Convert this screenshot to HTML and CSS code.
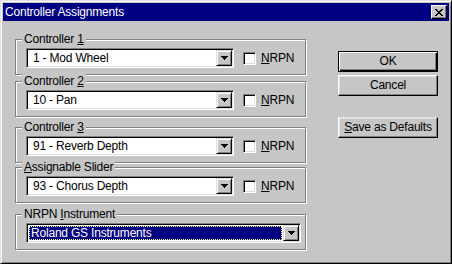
FILE: index.html
```html
<!DOCTYPE html>
<html>
<head>
<meta charset="utf-8">
<title>Controller Assignments</title>
<link rel="stylesheet" href="styles.css">
</head>
<body>
<div class="window">
  <div class="titlebar">
    <span class="title">Controller Assignments</span>
    <span class="close-btn">
      <svg width="8" height="7" viewBox="0 0 8 7" shape-rendering="crispEdges"><path d="M0 0h2v1h-2zM6 0h2v1h-2zM1 1h2v1h-2zM5 1h2v1h-2zM2 2h4v1h-4zM3 3h2v1h-2zM2 4h4v1h-4zM1 5h2v1h-2zM5 5h2v1h-2zM0 6h2v1h-2zM6 6h2v1h-2z" fill="#000"/></svg>
    </span>
  </div>
  <div class="content">
    <div class="groups">
      <div class="group">
        <div class="legend">Controller <u>1</u></div>
        <div class="row">
          <div class="combo"><span class="combo-text">1 - Mod Wheel</span><span class="drop"><svg width="7" height="4" viewBox="0 0 7 4" shape-rendering="crispEdges"><path d="M0 0h7v1h-1v1h-1v1h-1v1h-1v-1h-1v-1h-1v-1h-1z" fill="#000"/></svg></span></div>
          <span class="check"></span><span class="check-label"><u>N</u>RPN</span>
        </div>
      </div>
      <div class="group g2">
        <div class="legend">Controller <u>2</u></div>
        <div class="row">
          <div class="combo"><span class="combo-text">10 - Pan</span><span class="drop"><svg width="7" height="4" viewBox="0 0 7 4" shape-rendering="crispEdges"><path d="M0 0h7v1h-1v1h-1v1h-1v1h-1v-1h-1v-1h-1v-1h-1z" fill="#000"/></svg></span></div>
          <span class="check"></span><span class="check-label"><u>N</u>RPN</span>
        </div>
      </div>
      <div class="group g3">
        <div class="legend">Controller <u>3</u></div>
        <div class="row">
          <div class="combo"><span class="combo-text">91 - Reverb Depth</span><span class="drop"><svg width="7" height="4" viewBox="0 0 7 4" shape-rendering="crispEdges"><path d="M0 0h7v1h-1v1h-1v1h-1v1h-1v-1h-1v-1h-1v-1h-1z" fill="#000"/></svg></span></div>
          <span class="check"></span><span class="check-label"><u>N</u>RPN</span>
        </div>
      </div>
      <div class="group g4">
        <div class="legend"><u>A</u>ssignable Slider</div>
        <div class="row">
          <div class="combo"><span class="combo-text">93 - Chorus Depth</span><span class="drop"><svg width="7" height="4" viewBox="0 0 7 4" shape-rendering="crispEdges"><path d="M0 0h7v1h-1v1h-1v1h-1v1h-1v-1h-1v-1h-1v-1h-1z" fill="#000"/></svg></span></div>
          <span class="check"></span><span class="check-label"><u>N</u>RPN</span>
        </div>
      </div>
      <div class="group g5">
        <div class="legend">NRPN <u>I</u>nstrument</div>
        <div class="row">
          <div class="combo wide"><span class="combo-sel"><span class="sel-text">Roland GS Instruments</span></span><span class="drop"><svg width="7" height="4" viewBox="0 0 7 4" shape-rendering="crispEdges"><path d="M0 0h7v1h-1v1h-1v1h-1v1h-1v-1h-1v-1h-1v-1h-1z" fill="#000"/></svg></span></div>
        </div>
      </div>
    </div>
    <div class="buttons">
      <div class="btn default">OK</div>
      <div class="btn cancel">Cancel</div>
      <div class="btn save"><u>S</u>ave as Defaults</div>
    </div>
  </div>
</div>
</body>
</html>
```
FILE: styles.css
```css
html, body {
  margin: 0;
  padding: 0;
  background: #c6c6c6;
}
body {
  font-family: "Liberation Sans", Arial, sans-serif;
  font-size: 12px;
  letter-spacing: -0.2px;
  color: #000;
}
u {
  text-decoration: underline;
  text-underline-offset: 1px;
}
.window {
  width: 452px;
  height: 264px;
  box-sizing: border-box;
  background: #c6c6c6;
  border: 1px solid;
  border-color: #dfdfdf #000 #000 #dfdfdf;
  box-shadow: inset 1px 1px #fff, inset -1px -1px #808080;
  padding: 2px;
  display: flex;
  flex-direction: column;
}
.titlebar {
  height: 18px;
  flex: none;
  background: #000080;
  color: #fff;
  display: flex;
  align-items: center;
  padding: 0 2px 0 2px;
}
.title {
  flex: 1;
  line-height: 18px;
}
.close-btn {
  width: 16px;
  height: 14px;
  box-sizing: border-box;
  background: #c6c6c6;
  border: 1px solid;
  border-color: #fff #000 #000 #fff;
  box-shadow: inset -1px -1px #808080;
  display: flex;
  align-items: center;
  justify-content: center;
}
.close-btn svg {
  display: block;
  margin-left: -1px;
}
.content {
  flex: 1;
  display: flex;
  padding: 18px 0 0 12px;
}
.groups {
  display: flex;
  flex-direction: column;
  width: 292px;
}
.group {
  position: relative;
  box-sizing: border-box;
  width: 291px;
  height: 36px;
  border: 1px solid #808080;
  box-shadow: inset 1px 1px #fff, 1px 1px #fff;
  padding: 8px 0 0 10px;
}
.g2 { margin-top: 6px; }
.g3 { margin-top: 10px; }
.g4 { margin-top: 4px; }
.g5 { margin-top: 11px; }
.legend {
  position: absolute;
  left: 6px;
  top: -8px;
  padding: 0 2px;
  background: #c6c6c6;
  line-height: 14px;
  white-space: nowrap;
}
.row {
  display: flex;
  align-items: center;
}
.combo {
  width: 208px;
  height: 20px;
  box-sizing: border-box;
  background: #fff;
  border: 1px solid;
  border-color: #808080 #fff #fff #808080;
  box-shadow: inset 1px 1px #000, inset -1px -1px #dfdfdf;
  padding: 1px;
  display: flex;
}
.combo.wide {
  width: 275px;
}
.combo-text {
  flex: 1;
  line-height: 16px;
  padding-left: 5px;
  white-space: nowrap;
}
.combo-sel {
  flex: 1;
  margin: 1px;
  background: #000080;
  color: #fff;
  border: 1px dotted #ffff80;
  display: flex;
  align-items: center;
}
.sel-text {
  line-height: 12px;
  padding-left: 1px;
}
.drop {
  width: 16px;
  height: 16px;
  flex: none;
  box-sizing: border-box;
  background: #c6c6c6;
  border: 1px solid;
  border-color: #dfdfdf #000 #000 #dfdfdf;
  box-shadow: inset 1px 1px #fff, inset -1px -1px #808080;
  display: flex;
  align-items: center;
  justify-content: center;
}
.drop svg {
  display: block;
}
.check {
  margin-left: 9px;
  width: 13px;
  height: 13px;
  flex: none;
  box-sizing: border-box;
  background: #fff;
  border: 1px solid;
  border-color: #808080 #fff #fff #808080;
  box-shadow: inset 1px 1px #000, inset -1px -1px #dfdfdf;
}
.check-label {
  margin-left: 5px;
  line-height: 14px;
}
.buttons {
  margin-left: 31px;
  padding-top: 12px;
  display: flex;
  flex-direction: column;
}
.btn {
  width: 100px;
  height: 21px;
  box-sizing: border-box;
  background: #c6c6c6;
  border: 1px solid;
  border-color: #fff #000 #000 #fff;
  box-shadow: inset -1px -1px #808080, inset 1px 1px #dfdfdf;
  text-align: center;
  line-height: 19px;
}
.btn.default {
  border-color: #000;
  box-shadow: inset 1px 1px #fff, inset -1px -1px #000, inset -2px -2px #808080;
}
.btn.cancel {
  margin-top: 3px;
}
.btn.save {
  margin-top: 21px;
  border-top: 1px dotted #fff;
}
```
